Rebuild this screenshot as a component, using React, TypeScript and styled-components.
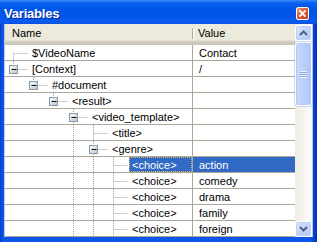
import styled, { createGlobalStyle } from "styled-components";

interface VariableRow {
  name: string;
  value: string;
  level: number;
  /** levels whose vertical guide runs straight through this row */
  through: number[];
  fromTop: boolean;
  toBottom: boolean;
  expandable: boolean;
  selected?: boolean;
}

const ROWS: VariableRow[] = [
  { name: "$VideoName", value: "Contact", level: 0, through: [], fromTop: false, toBottom: true, expandable: false },
  { name: "[Context]", value: "/", level: 0, through: [], fromTop: true, toBottom: false, expandable: true },
  { name: "#document", value: "", level: 1, through: [], fromTop: true, toBottom: false, expandable: true },
  { name: "<result>", value: "", level: 2, through: [], fromTop: true, toBottom: false, expandable: true },
  { name: "<video_template>", value: "", level: 3, through: [], fromTop: true, toBottom: true, expandable: true },
  { name: "<title>", value: "", level: 4, through: [3], fromTop: true, toBottom: true, expandable: false },
  { name: "<genre>", value: "", level: 4, through: [3], fromTop: true, toBottom: true, expandable: true },
  { name: "<choice>", value: "action", level: 5, through: [3, 4], fromTop: true, toBottom: true, expandable: false, selected: true },
  { name: "<choice>", value: "comedy", level: 5, through: [3, 4], fromTop: true, toBottom: true, expandable: false },
  { name: "<choice>", value: "drama", level: 5, through: [3, 4], fromTop: true, toBottom: true, expandable: false },
  { name: "<choice>", value: "family", level: 5, through: [3, 4], fromTop: true, toBottom: true, expandable: false },
  { name: "<choice>", value: "foreign", level: 5, through: [3, 4], fromTop: true, toBottom: true, expandable: false },
];

const GlobalStyle = createGlobalStyle`
  body {
    margin: 0;
    overflow: hidden;
    font-family: "Liberation Sans", Arial, sans-serif;
  }
`;

const Window = styled.div`
  width: 317px;
  height: 242px;
  display: grid;
  grid-template-rows: 24px 213px;
  padding: 0 4px 5px 4px;
  box-sizing: border-box;
  background: linear-gradient(to right, #0339c4 0px, #0a52e6 2px, #0b55ea 4px, #0b55ea 309px, #0846d8 313px, #0331b0 317px);
`;

const TitleBar = styled.div`
  margin: 0 -4px;
  display: flex;
  align-items: center;
  justify-content: space-between;
  padding: 3px 8px 0 4px;
  background: linear-gradient(
    to bottom,
    #3a8cf8 0px,
    #0a5ff0 3px,
    #0157ec 8px,
    #0054e8 16px,
    #0a5bef 21px,
    #0a52e0 24px
  );
`;

const Title = styled.span`
  color: #ffffff;
  font-weight: bold;
  font-size: 13px;
  letter-spacing: -0.2px;
  text-shadow: 1px 1px 0 #0a2a9a;
`;

const CloseButton = styled.div`
  width: 13px;
  height: 13px;
  box-sizing: border-box;
  border: 1px solid #ffffff;
  border-radius: 2px;
  background: linear-gradient(135deg, #f09a7c 0%, #e0603c 40%, #c8401c 100%);
  display: flex;
  align-items: center;
  justify-content: center;
`;

const Body = styled.div`
  display: flex;
  border-left: 1px solid #b9c4e8;
  border-right: 1px solid #b9c4e8;
  background: #ffffff;
`;

const List = styled.div`
  width: 290px;
  display: flex;
  flex-direction: column;
`;

const Header = styled.div`
  display: grid;
  grid-template-columns: 188px 102px;
  height: 21px;
  box-sizing: border-box;
  background: #ebeadb;
  border-bottom: 3px solid #cbc7b8;
  box-shadow: inset 0 -1px 0 #d6d2c2, inset 0 -2px 0 #e2decd;
`;

const HeaderCell = styled.div<{ $pad: number; $divider?: boolean }>`
  display: flex;
  align-items: center;
  padding-left: ${({ $pad }) => $pad}px;
  font-size: 11px;
  color: #000000;
  position: relative;
  ${({ $divider }) =>
    $divider &&
    `
    &::after {
      content: "";
      position: absolute;
      right: 0;
      top: 4px;
      height: 11px;
      width: 1px;
      background: #aca899;
      box-shadow: 1px 0 0 #ffffff;
    }
  `}
`;

const Row = styled.div`
  display: grid;
  grid-template-columns: 188px 102px;
  height: 16px;
`;

const NameCell = styled.div`
  display: flex;
  align-items: stretch;
  border-right: 1px solid #aca899;
  border-bottom: 1px solid #aca899;
  overflow: hidden;
`;

const Guides = styled.svg`
  flex: none;
  display: block;
`;

const Label = styled.span<{ $selected?: boolean }>`
  flex: 1;
  display: flex;
  align-items: center;
  padding-left: 3px;
  font-size: 11px;
  white-space: nowrap;
  color: ${({ $selected }) => ($selected ? "#ffffff" : "#000000")};
  background: ${({ $selected }) => ($selected ? "#316ac5" : "transparent")};
  ${({ $selected }) => $selected && "outline: 1px dotted #e8b860; outline-offset: -1px;"}
`;

const ValueCell = styled.div<{ $selected?: boolean }>`
  display: flex;
  align-items: center;
  padding-left: 6px;
  font-size: 11px;
  white-space: nowrap;
  border-bottom: 1px solid #aca899;
  color: ${({ $selected }) => ($selected ? "#ffffff" : "#000000")};
  background: ${({ $selected }) => ($selected ? "#316ac5" : "#ffffff")};
`;

const Scrollbar = styled.div`
  width: 17px;
  display: flex;
  flex-direction: column;
  padding-top: 1px;
  background: linear-gradient(to right, #eeede5, #fcfcfa);
`;

const ScrollButton = styled.div`
  height: 16px;
  box-sizing: border-box;
  border: 1px solid #ffffff;
  border-radius: 3px;
  background: linear-gradient(135deg, #dce6fd 0%, #c3d4fb 50%, #b4c8f6 100%);
  box-shadow: inset 0 0 0 1px #bccff7;
  display: flex;
  align-items: center;
  justify-content: center;
`;

const Track = styled.div`
  flex: 1;
  padding-top: 1px;
`;

const Thumb = styled.div`
  height: 64px;
  box-sizing: border-box;
  border: 1px solid #ffffff;
  border-radius: 3px;
  background: linear-gradient(to right, #c8d7fc 0%, #bccffa 50%, #b0c5f5 100%);
  box-shadow: inset 0 0 0 1px #b5c9f6, 0 0 0 0.5px #9fb6ea;
  display: flex;
  align-items: center;
  justify-content: center;
`;

const Grip = styled.div`
  width: 7px;
  height: 7px;
  background: repeating-linear-gradient(
    to bottom,
    #eef3fe 0px,
    #eef3fe 1px,
    #8ca4dc 1px,
    #8ca4dc 2px
  );
`;

const ROW_H = 15;

const TreeGuides = ({ level, through, fromTop, toBottom, expandable }: VariableRow) => {
  const width = 24 + level * 20;
  const cx = 8 + level * 20 + 0.5;
  const cy = 8.5;
  const dot = { stroke: "#a0a0a0", strokeWidth: 1, strokeDasharray: "1 1" };

  return (
    <Guides width={width} height={ROW_H} viewBox={`0 0 ${width} ${ROW_H}`}>
      {through.map((k) => (
        <line key={k} x1={8 + k * 20 + 0.5} y1={0} x2={8 + k * 20 + 0.5} y2={ROW_H} {...dot} />
      ))}
      {fromTop && <line x1={cx} y1={0} x2={cx} y2={cy} {...dot} />}
      {toBottom && <line x1={cx} y1={cy - 1} x2={cx} y2={ROW_H} {...dot} />}
      <line x1={cx + 1} y1={cy} x2={width - 1} y2={cy} {...dot} />
      {expandable && (
        <g>
          <defs>
            <linearGradient id={`box-${level}`} x1="0" y1="0" x2="1" y2="1">
              <stop offset="0" stopColor="#ffffff" />
              <stop offset="1" stopColor="#c4c1b4" />
            </linearGradient>
          </defs>
          <rect
            x={cx - 4}
            y={cy - 4}
            width={8}
            height={8}
            fill={`url(#box-${level})`}
            stroke="#7b9ab4"
          />
          <line x1={cx - 2} y1={cy} x2={cx + 3} y2={cy} stroke="#0a0a30" strokeWidth={1} />
        </g>
      )}
    </Guides>
  );
};

const VariablesWindow = () => {
  return (
    <Window>
      <TitleBar>
        <Title>Variables</Title>
        <CloseButton>
          <svg width="7" height="7" viewBox="0 0 7 7">
            <path d="M1 1 L6 6 M6 1 L1 6" stroke="#ffffff" strokeWidth="1.8" strokeLinecap="square" />
          </svg>
        </CloseButton>
      </TitleBar>
      <Body>
        <List>
          <Header>
            <HeaderCell $pad={7} $divider>
              Name
            </HeaderCell>
            <HeaderCell $pad={5}>Value</HeaderCell>
          </Header>
          {ROWS.map((row, i) => (
            <Row key={`variable-row-${i}`}>
              <NameCell>
                <TreeGuides {...row} />
                <Label $selected={row.selected}>{row.name}</Label>
              </NameCell>
              <ValueCell $selected={row.selected}>{row.value}</ValueCell>
            </Row>
          ))}
        </List>
        <Scrollbar>
          <ScrollButton>
            <svg width="9" height="6" viewBox="0 0 9 6">
              <path d="M1 5 L4.5 1.5 L8 5" fill="none" stroke="#4d6185" strokeWidth="2" />
            </svg>
          </ScrollButton>
          <Track>
            <Thumb>
              <Grip />
            </Thumb>
          </Track>
          <ScrollButton>
            <svg width="9" height="6" viewBox="0 0 9 6">
              <path d="M1 1 L4.5 4.5 L8 1" fill="none" stroke="#4d6185" strokeWidth="2" />
            </svg>
          </ScrollButton>
        </Scrollbar>
      </Body>
    </Window>
  );
};

export default function App() {
  return (
    <>
      <GlobalStyle />
      <VariablesWindow />
    </>
  );
}
